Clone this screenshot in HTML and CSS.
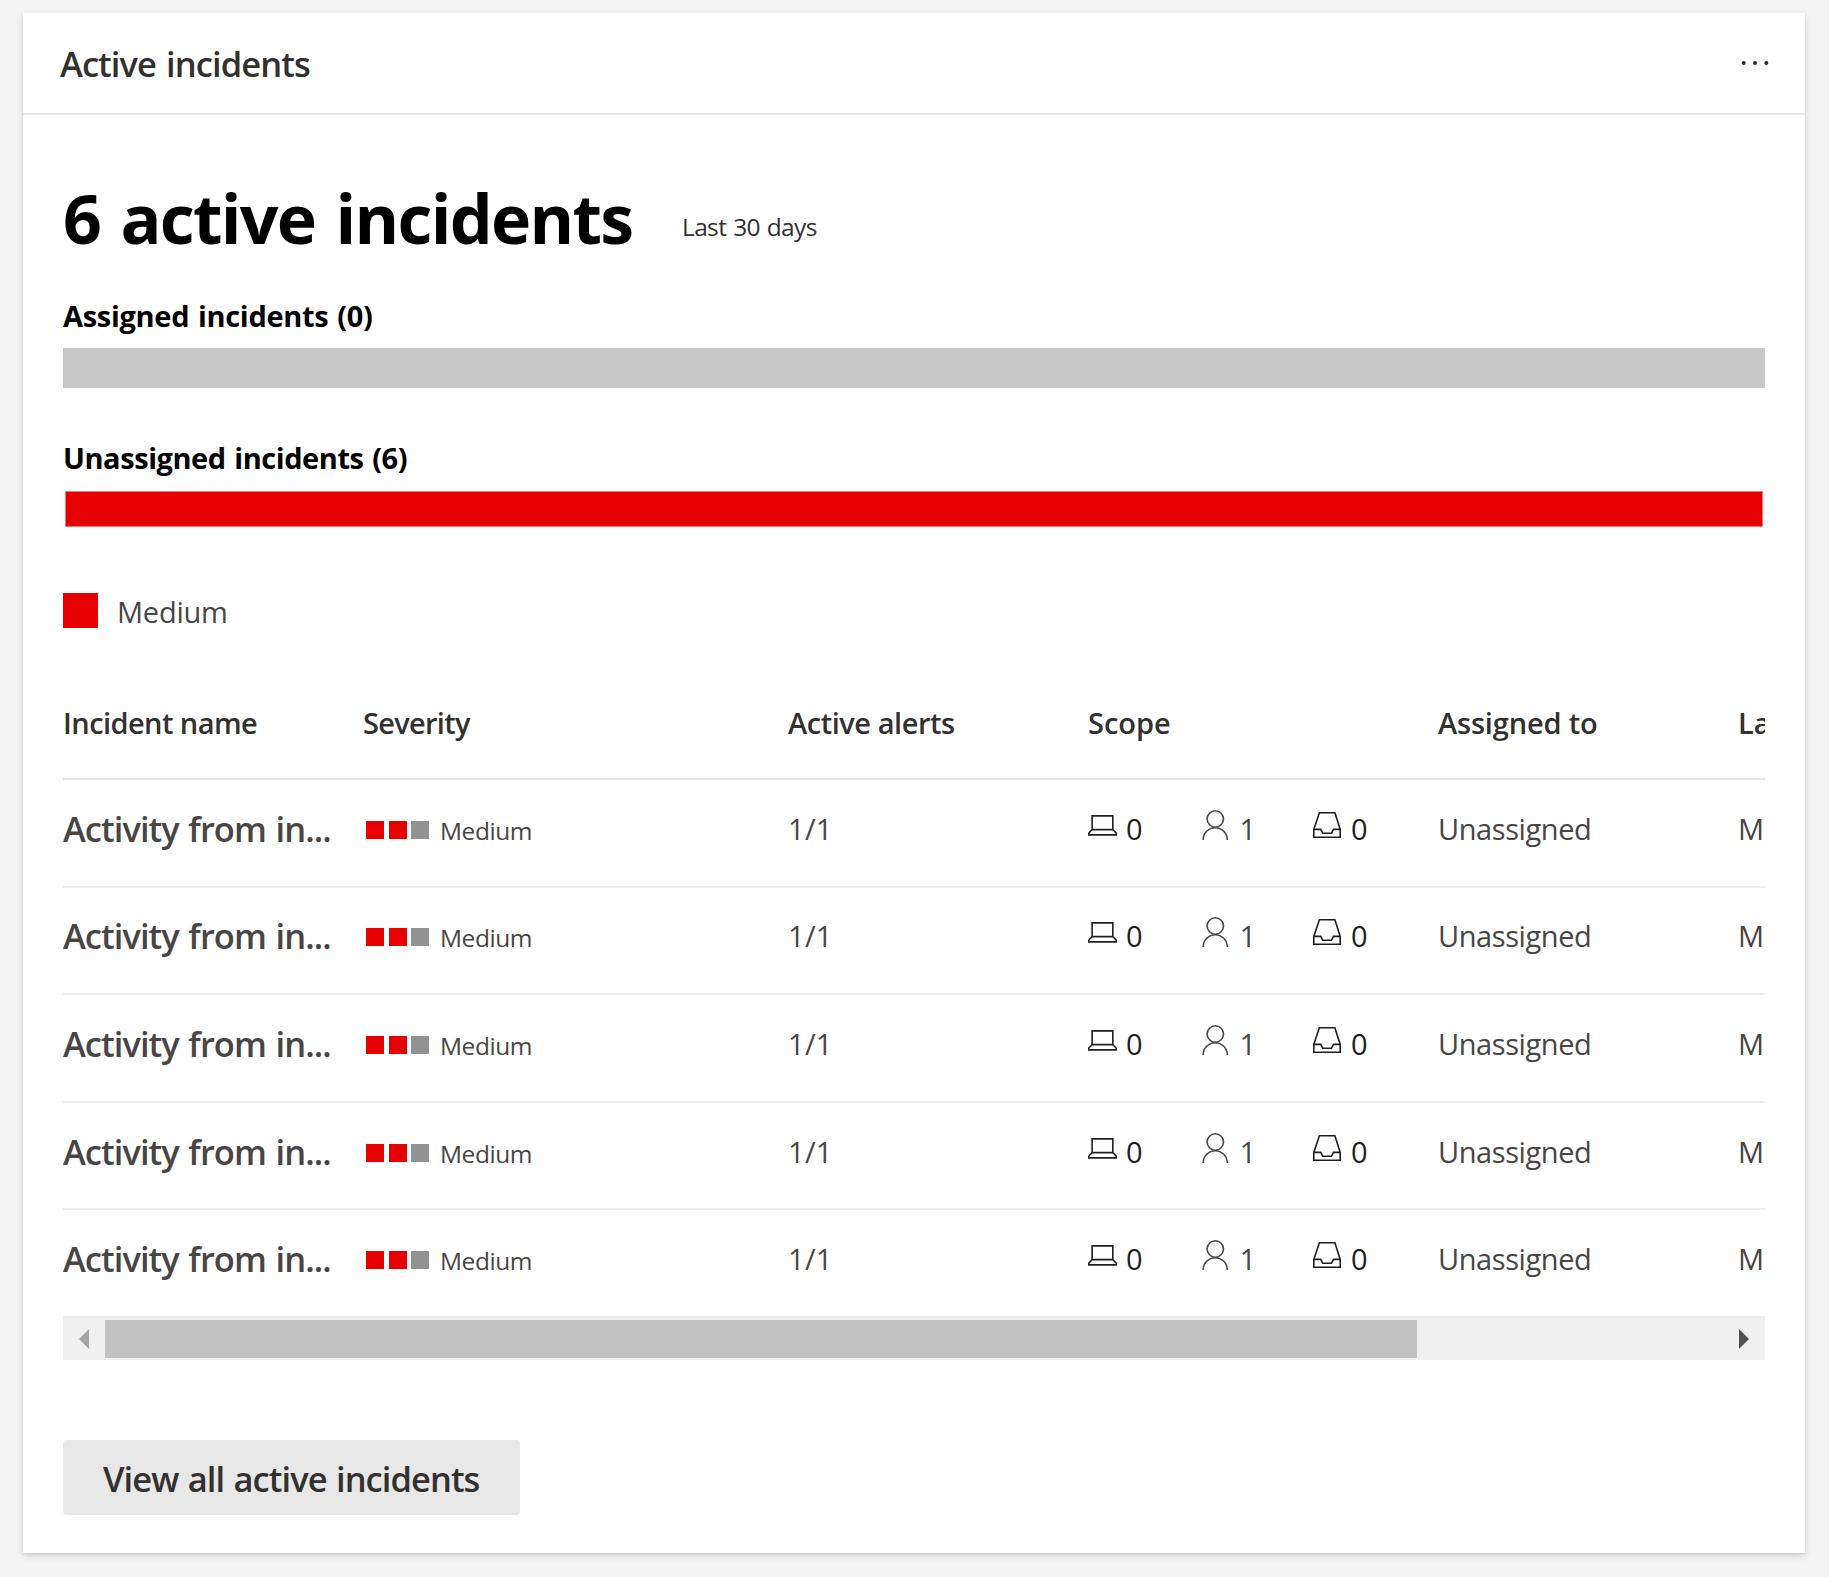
FILE: index.html
```html
<!DOCTYPE html>
<html lang="en">
<head>
<meta charset="utf-8">
<title>Active incidents</title>
<link rel="stylesheet" href="styles.css">
</head>
<body>
<svg class="defs" aria-hidden="true">
  <symbol id="laptop" viewBox="0 0 30 32"><path d="M4.1 5.9h20.7v13.7H4.1zM4.1 19.6.8 23v1.9h27.4V23l-3.4-3.4"/></symbol>
  <symbol id="person" viewBox="0 0 30 32"><circle cx="15.3" cy="9" r="8.2"/><path d="M3.1 30a12.1 12.3 0 0 1 24.2 0"/></symbol>
  <symbol id="inbox" viewBox="0 0 30 32"><path d="M7.4 2.8h15.5l5.3 16.6v7.8H1.8v-7.8zM1.8 19.4h6.9l2 3.8h8.8l2-3.8h6.7"/></symbol>
</svg>
<main class="card">
  <header class="card-header">
    <h2 class="card-title">Active incidents</h2>
    <svg class="more" viewBox="0 0 28 6"><circle cx="2.7" cy="3" r="2"/><circle cx="14" cy="3" r="2"/><circle cx="25.3" cy="3" r="2"/></svg>
  </header>
  <div class="card-body">
    <div class="summary">
      <h1 class="count">6 active incidents</h1>
      <span class="period">Last 30 days</span>
    </div>
    <div class="label assigned">Assigned incidents (0)</div>
    <div class="bar"></div>
    <div class="label unassigned">Unassigned incidents (6)</div>
    <div class="bar bar-medium"></div>
    <div class="legend"><i class="swatch"></i><span class="legend-text">Medium</span></div>

    <section class="table">
      <div class="row head">
        <span class="h-name">Incident name</span><span class="h-severity">Severity</span><span class="h-alerts">Active alerts</span><span>Scope</span><span class="h-assigned">Assigned to</span><span class="clip">La</span>
      </div>
      <div class="row">
        <span class="name">Activity from in...</span>
        <span class="severity"><i></i><i></i><i class="off"></i><b>Medium</b></span>
        <span class="alerts">1/1</span>
        <span class="scope"><span><svg><use href="#laptop"/></svg>0</span><span class="users"><svg><use href="#person"/></svg>1</span><span class="mail"><svg><use href="#inbox"/></svg>0</span></span>
        <span class="owner">Unassigned</span><span class="clip">M</span>
      </div>
      <div class="row">
        <span class="name">Activity from in...</span>
        <span class="severity"><i></i><i></i><i class="off"></i><b>Medium</b></span>
        <span class="alerts">1/1</span>
        <span class="scope"><span><svg><use href="#laptop"/></svg>0</span><span class="users"><svg><use href="#person"/></svg>1</span><span class="mail"><svg><use href="#inbox"/></svg>0</span></span>
        <span class="owner">Unassigned</span><span class="clip">M</span>
      </div>
      <div class="row">
        <span class="name">Activity from in...</span>
        <span class="severity"><i></i><i></i><i class="off"></i><b>Medium</b></span>
        <span class="alerts">1/1</span>
        <span class="scope"><span><svg><use href="#laptop"/></svg>0</span><span class="users"><svg><use href="#person"/></svg>1</span><span class="mail"><svg><use href="#inbox"/></svg>0</span></span>
        <span class="owner">Unassigned</span><span class="clip">M</span>
      </div>
      <div class="row">
        <span class="name">Activity from in...</span>
        <span class="severity"><i></i><i></i><i class="off"></i><b>Medium</b></span>
        <span class="alerts">1/1</span>
        <span class="scope"><span><svg><use href="#laptop"/></svg>0</span><span class="users"><svg><use href="#person"/></svg>1</span><span class="mail"><svg><use href="#inbox"/></svg>0</span></span>
        <span class="owner">Unassigned</span><span class="clip">M</span>
      </div>
      <div class="row">
        <span class="name">Activity from in...</span>
        <span class="severity"><i></i><i></i><i class="off"></i><b>Medium</b></span>
        <span class="alerts">1/1</span>
        <span class="scope"><span><svg><use href="#laptop"/></svg>0</span><span class="users"><svg><use href="#person"/></svg>1</span><span class="mail"><svg><use href="#inbox"/></svg>0</span></span>
        <span class="owner">Unassigned</span><span class="clip">M</span>
      </div>
    </section>
    <div class="scrollbar">
      <svg class="arrow left" viewBox="0 0 10 20"><path d="M10 0v20L0 10z"/></svg>
      <div class="thumb"></div>
      <svg class="arrow right" viewBox="0 0 10 20"><path d="M0 0v20l10-10z"/></svg>
    </div>
    <button class="view-all" type="button">View all active incidents</button>
  </div>
</main>
</body>
</html>
```
FILE: styles.css
```css
* { box-sizing: border-box; }

body {
  margin: 0;
  padding: 13px 24px 24px 23px;
  height: 1577px;
  overflow: hidden;
  background: #f4f4f4;
  color: #323130;
  font-family: "Open Sans", "Noto Sans", sans-serif;
}

.defs { position: absolute; width: 0; height: 0; }

h1, h2 { margin: 0; }

.card {
  height: 1540px;
  background: #fff;
  box-shadow: 0 3px 8px rgba(0, 0, 0, .13), 0 1px 2px rgba(0, 0, 0, .09);
}

.card-header {
  display: flex;
  align-items: center;
  justify-content: space-between;
  height: 102px;
  padding: 1px 36px 0 37px;
  border-bottom: 2px solid #e8e8e8;
}

.card-title {
  font-size: 34.5px;
  font-weight: 600;
  line-height: 48px;
  letter-spacing: -.92px;
  word-spacing: 2px;
}

.more { width: 28px; height: 6px; margin-bottom: 1px; fill: #323130; }

.card-body { padding: 63px 40px 0; }

.summary { display: flex; align-items: flex-start; color: #000; }

.count {
  width: 619px;
  font-size: 68px;
  font-weight: 700;
  line-height: 80px;
  letter-spacing: -1.75px;
  word-spacing: 4.5px;
  white-space: nowrap;
}

.period {
  margin-top: 32px;
  color: #323130;
  font-size: 24.5px;
  line-height: 34px;
  letter-spacing: -.65px;
  word-spacing: 1.2px;
}

.label {
  color: #000;
  font-size: 29px;
  font-weight: 700;
  line-height: 40px;
  word-spacing: 1.5px;
}
.assigned { margin-top: 38px; letter-spacing: -.3px; }
.unassigned { margin-top: 50px; letter-spacing: -.44px; }

.bar { height: 40px; margin-top: 12px; background: #c8c8c8; }
.bar-medium {
  height: 36px;
  margin: 13px 2px 0;
  border: 1px solid #f27979;
  background: #e60000;
}

.legend { display: flex; gap: 19px; height: 35px; margin-top: 66px; }
.swatch { width: 35px; height: 35px; background: #e60000; }
.legend-text {
  margin-top: 1px;
  font-size: 29px;
  line-height: 35px;
  letter-spacing: -.24px;
  color: #484644;
}

.table { margin-top: 75px; overflow: hidden; }

.row {
  display: grid;
  grid-template-columns: 300px 425px 300px 350px 300px 27px;
  align-items: center;
  height: 107.6px;
  padding-bottom: 8px;
  border-bottom: 2px solid #ededed;
  color: #484644;
  font-size: 29px;
  line-height: 40px;
  white-space: nowrap;
}

.head {
  height: 77px;
  padding-bottom: 35px;
  border-bottom-color: #e6e6e6;
  color: #323130;
  font-weight: 600;
}
.h-name { letter-spacing: -.57px; }
.h-severity { letter-spacing: -.7px; }
.h-alerts { letter-spacing: -.46px; }
.h-assigned { letter-spacing: -.18px; }

.clip { overflow: hidden; }

.name {
  font-size: 34.5px;
  font-weight: 600;
  letter-spacing: -.95px;
  word-spacing: 1.6px;
}

.severity { display: flex; align-items: center; gap: 4.5px; padding: 2px 0 0 3px; }
.severity i { width: 18px; height: 18px; background: #e60000; }
.severity .off { background: #929292; }
.severity b {
  margin: 2px 0 0 6.5px;
  font-size: 24.5px;
  font-weight: 400;
  letter-spacing: -.45px;
}

.alerts { letter-spacing: .3px; }
.owner { letter-spacing: -.42px; }

.scope { display: grid; grid-template-columns: 112px 112px auto; color: #201f1e; }
.scope > span { display: flex; align-items: center; gap: 8px; }
.scope .users { gap: 9.5px; color: #484644; }
.scope .mail { gap: 9px; }
.scope svg {
  width: 30px;
  height: 32px;
  margin-top: -6px;
  fill: none;
  stroke: currentColor;
  stroke-width: 1.6;
}

.scrollbar {
  display: flex;
  align-items: center;
  height: 42px;
  background: #f0f0f0;
}
.arrow { width: 10px; height: 20px; }
.arrow.left { margin: 0 16px; fill: #a3a3a3; }
.arrow.right { margin: 0 16px 0 auto; fill: #505050; }
.thumb { width: 1312px; height: 38px; background: #c1c1c1; }

.view-all {
  display: block;
  width: 457px;
  height: 75px;
  margin-top: 80px;
  padding: 3px 0 0 40px;
  border: 0;
  border-radius: 4px;
  background: #e8e8e8;
  color: #323130;
  font: 600 34.5px/48px "Open Sans", "Noto Sans", sans-serif;
  letter-spacing: -.95px;
  word-spacing: 1.4px;
  text-align: left;
  white-space: nowrap;
}
```
